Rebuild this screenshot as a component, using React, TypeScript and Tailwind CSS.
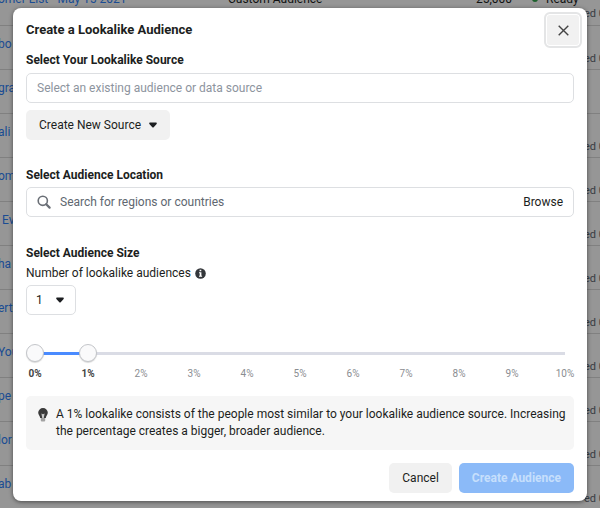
import { useState } from "react";

type Row = { name: string; inset: string; note: boolean; type?: string; size?: string };

const rows: Row[] = [
  { name: "omer List - May 15 2021", inset: "pl-0", note: true, type: "Custom Audience", size: "25,000" },
  { name: "bo", inset: "pl-0", note: true },
  { name: "gra", inset: "pl-0", note: false },
  { name: "ali", inset: "pl-0", note: true },
  { name: "om", inset: "pl-0", note: true },
  { name: "Ev", inset: "pl-1", note: true },
  { name: "ha", inset: "pl-0", note: true },
  { name: "ert", inset: "pl-0", note: true },
  { name: "You", inset: "pl-0", note: true },
  { name: "pe", inset: "pl-0", note: true },
  { name: "lor", inset: "pl-0", note: true },
  { name: "ab", inset: "pl-0", note: true },
];

const percents = [0, 1, 2, 3, 4, 5, 6, 7, 8, 9, 10];

const rangeClass =
  "pointer-events-none absolute inset-0 m-0 h-[18px] w-full appearance-none bg-transparent [&::-webkit-slider-thumb]:pointer-events-auto [&::-webkit-slider-thumb]:h-[18px] [&::-webkit-slider-thumb]:w-[18px] [&::-webkit-slider-thumb]:appearance-none [&::-webkit-slider-thumb]:rounded-full [&::-webkit-slider-thumb]:border [&::-webkit-slider-thumb]:border-solid [&::-webkit-slider-thumb]:border-[#c4c6ca] [&::-webkit-slider-thumb]:bg-[#fafafb] [&::-webkit-slider-thumb]:shadow-[0_1px_1px_rgba(0,0,0,0.15)]";

function Caret() {
  return (
    <svg className="h-[6px] w-[8px]" viewBox="0 0 8 6" aria-hidden="true">
      <path d="M1 .5h6q1 0 .8 1-.1.500-.6 1L4.700 5.200q-.7.600-1.400 0L.8 2.500Q.3 2 .2 1.500 0 .5 1 .5Z" fill="#1c1e21" />
    </svg>
  );
}

function AudienceTable() {
  return (
    <div className="absolute inset-0 overflow-hidden" aria-hidden="true">
      <table className="-mt-[19px] w-full table-fixed border-collapse text-xs leading-4">
        <tbody>
          {rows.map((row) => (
            <tr key={row.name} className="h-11 border-b border-[#d5d5d5] align-top">
              <td className={`w-[228px] -indent-0.5 pt-[10px] whitespace-nowrap text-[#2e7ff5] ${row.inset}`}>
                {row.name}
              </td>
              <td className="pt-[10px] whitespace-nowrap">{row.type}</td>
              <td className="w-[96px] pt-[10px] text-right">{row.size}</td>
              <td className="w-[88px] pt-[10px]">
                <div className="flex h-4 items-center gap-2 pl-[20px]">
                  {row.size && (
                    <>
                      <span className="size-1.5 rounded-full bg-[#31a24c]" />
                      Ready
                    </>
                  )}
                </div>
                <div className="pl-[72px] text-[11px] leading-[14px] whitespace-nowrap text-[#606770]">
                  {row.note && "ed 0"}
                </div>
              </td>
            </tr>
          ))}
        </tbody>
      </table>
    </div>
  );
}

export default function App() {
  const [low, setLow] = useState(0);
  const [high, setHigh] = useState(1);

  return (
    <div className="relative min-h-screen overflow-hidden bg-[#fafafa] font-[Roboto,'Liberation_Sans',sans-serif] text-[#1c1e21]">
      <AudienceTable />
      <div className="absolute inset-0 bg-black/40" />
      <main className="relative px-[13px] py-2">
        <div
          role="dialog"
          aria-labelledby="title"
          className="rounded-lg bg-white pt-1 pb-2 text-xs leading-4 shadow-[0_1px_4px_rgba(0,0,0,0.5)]"
        >
          <header className="flex items-center justify-between pr-[5px] pl-[13px]">
            <h1 id="title" className="text-[13px] font-bold">
              Create a Lookalike Audience
            </h1>
            <button
              type="button"
              aria-label="Close"
              className="flex h-9 w-[38px] items-center justify-center rounded-md border-2 border-[#e4e5e6] bg-[#f1f1f1] shadow-[inset_0_0_0_1px_#fff]"
            >
              <svg className="size-[11px]" viewBox="0 0 11 11" aria-hidden="true">
                <path d="M.7.7l9.600 9.600M10.300.7L.7 10.300" stroke="#444" strokeWidth="1.400" />
              </svg>
            </button>
          </header>

          <div className="px-[13px]">
            <section className="pt-1">
              <label htmlFor="source" className="block font-bold">
                Select Your Lookalike Source
              </label>
              <input
                id="source"
                type="text"
                placeholder="Select an existing audience or data source"
                className="mt-[5px] block h-[30px] w-full rounded-[5px] border border-[#dddfe2] px-2.5 placeholder:text-[#8d949e]"
              />
              <button
                type="button"
                className="mt-[7px] flex h-[30px] items-center gap-2 rounded-[5px] bg-[#f1f1f1] px-[13px]"
              >
                Create New Source
                <Caret />
              </button>
            </section>

            <section className="pt-[27px]">
              <label htmlFor="location" className="block font-bold">
                Select Audience Location
              </label>
              <div className="mt-1 flex h-[30px] items-center rounded-[5px] border border-[#dddfe2] px-2.5">
                <svg className="size-[14px]" viewBox="0 0 14 14" fill="none" stroke="#6a6f76" aria-hidden="true">
                  <circle cx="5.800" cy="5.800" r="4.600" strokeWidth="1.600" />
                  <path d="M9.200 9.200l3.400 3.400" strokeWidth="2.200" strokeLinecap="round" />
                </svg>
                <input
                  id="location"
                  type="text"
                  placeholder="Search for regions or countries"
                  className="h-full min-w-0 flex-1 px-[9px] outline-none placeholder:text-[#606770]"
                />
                <button type="button">Browse</button>
              </div>
            </section>

            <section className="pt-7">
              <h2 className="font-bold">Select Audience Size</h2>
              <div className="mt-1 flex items-center gap-1">
                <label htmlFor="count">Number of lookalike audiences</label>
                <svg className="size-[11px]" viewBox="0 0 11 11" aria-hidden="true">
                  <circle cx="5.500" cy="5.500" r="5.300" fill="#33363a" />
                  <path d="M4.600 1.800h1.700v1.400H4.600zM4 4.300h2.400v3.500h.7v1H4v-1h.7V5.300H4z" fill="#fff" />
                </svg>
              </div>
              <div className="relative mt-1 w-[50px]">
                <select
                  id="count"
                  className="block h-[30px] w-full appearance-none rounded-[5px] border border-[#dddfe2] bg-white pl-[9px]"
                >
                  <option>1</option>
                  <option>2</option>
                  <option>3</option>
                </select>
                <span className="pointer-events-none absolute inset-y-0 right-3 flex items-center">
                  <Caret />
                </span>
              </div>
            </section>

            <section className="pt-[29px]">
              <div className="relative flex h-[18px] items-center px-[9px]">
                <div className="h-[3px] flex-1 bg-[#dadce5]">
                  <div
                    className="h-full bg-[#4a8bff]"
                    style={{ marginLeft: `${low * 10}%`, width: `${(high - low) * 10}%` }}
                  />
                </div>
                <input
                  type="range"
                  aria-label="From percent"
                  min={0}
                  max={10}
                  value={low}
                  onChange={(e) => setLow(Math.min(Number(e.target.value), high - 1))}
                  className={rangeClass}
                />
                <input
                  type="range"
                  aria-label="To percent"
                  min={0}
                  max={10}
                  value={high}
                  onChange={(e) => setHigh(Math.max(Number(e.target.value), low + 1))}
                  className={rangeClass}
                />
              </div>
              <div className="mt-1.5 flex justify-between text-[10px] leading-3">
                {percents.map((p) => (
                  <span
                    key={p}
                    className={`flex w-[18px] justify-center ${p === low || p === high ? "font-bold text-[#444]" : "text-[#8a8d91]"}`}
                  >
                    {p}%
                  </span>
                ))}
              </div>
            </section>

            <div className="mt-4 flex gap-2 rounded-[5px] bg-[#f6f6f6] py-2.5 pr-1 pl-3">
              <svg className="mt-0.5 h-[14px] w-[10px] shrink-0" viewBox="0 0 10 14" aria-hidden="true">
                <path d="M5 0a4.800 4.800 0 0 0-4.800 4.800c0 2 1.700 2.900 2 5.200h5.600c.3-2.300 2-3.200 2-5.200A4.800 4.800 0 0 0 5 0Z" fill="#3a3a3a" />
                <path d="M3.400 5.500l.8 4.500h1.600l.8-4.500L5 6.200Z" fill="#c9c9c9" />
                <path d="M2.800 10h4.400v2.600q0 1-1 1H3.800q-1 0-1-1Z" fill="#a2a2a2" />
              </svg>
              <p className="leading-[17px]">
                A 1% lookalike consists of the people most similar to your lookalike audience source. Increasing the
                percentage creates a bigger, broader audience.
              </p>
            </div>

            <footer className="mt-[13px] flex justify-end gap-[7px]">
              <button type="button" className="h-[30px] rounded-[5px] bg-[#f1f1f1] px-[13px]">
                Cancel
              </button>
              <button type="button" className="h-[30px] rounded-[5px] bg-[#8bbaf8] px-[13px] font-bold text-[#c6dffc]">
                Create Audience
              </button>
            </footer>
          </div>
        </div>
      </main>
    </div>
  );
}
